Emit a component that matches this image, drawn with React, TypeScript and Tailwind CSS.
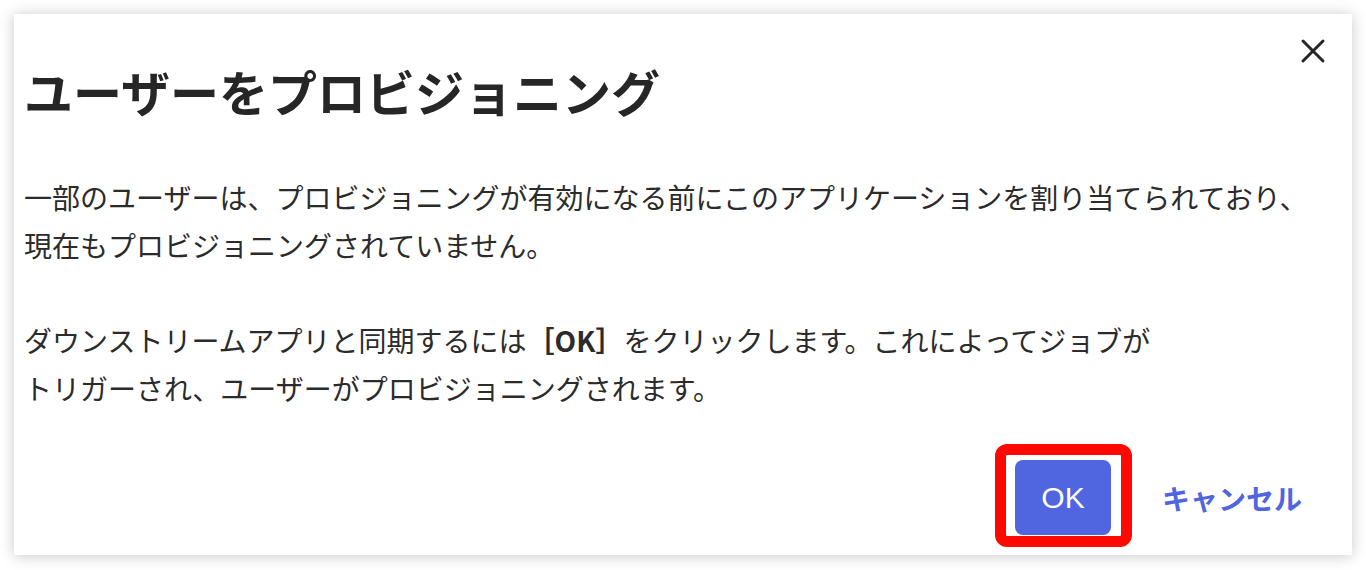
import { X } from "lucide-react";

const jp = "font-['Noto_Sans_CJK_JP','Noto_Sans',sans-serif]";

/** ユーザーのプロビジョニング確認ダイアログ */
export default function App() {
  return (
    <div className={`min-h-[570px] bg-white pt-[14px] pl-[14px] ${jp}`}>
      <div className="relative h-[541px] w-[1338px] bg-white shadow-[0_1px_14px_rgba(0,0,0,0.22)] pl-[10px] pr-[50px] pt-[47px]">
        <button
          type="button"
          aria-label="閉じる"
          className="absolute right-[19px] top-[17px] flex h-[40px] w-[40px] items-center justify-center text-[#262626]"
        >
          <X size={40} strokeWidth={1.8} />
        </button>

        <h1 className="text-[49px] font-bold leading-[60px] text-[#262626]">
          ユーザーをプロビジョニング
        </h1>

        <div className="mt-[52px] whitespace-nowrap text-[28px] leading-[48px] text-[#2b2b2b]">
          <p>
            一部のユーザーは、プロビジョニングが有効になる前にこのアプリケーションを割り当てられており、
            <br />
            現在もプロビジョニングされていません。
          </p>
          <p className="mt-[47px]">
            ダウンストリームアプリと同期するには<span className="font-bold">［OK］</span>をクリックします。これによってジョブが
            <br />
            トリガーされ、ユーザーがプロビジョニングされます。
          </p>
        </div>

        <div className="mt-[48px] flex items-center justify-end gap-[51px]">
          <div className="relative">
            <button
              type="button"
              className="h-[75px] w-[96px] rounded-[8px] bg-[#4f66e0] font-['Liberation_Sans',sans-serif] text-[30px] text-white"
            >
              OK
            </button>
            {/* 強調枠 */}
            <div className="pointer-events-none absolute -bottom-[12px] -left-[20px] -right-[21px] -top-[16px] rounded-[12px] border-[11px] border-[#ff0800]" />
          </div>
          <button
            type="button"
            className="text-[28px] font-bold leading-[48px] text-[#4f66e0]"
          >
            キャンセル
          </button>
        </div>
      </div>
    </div>
  );
}
